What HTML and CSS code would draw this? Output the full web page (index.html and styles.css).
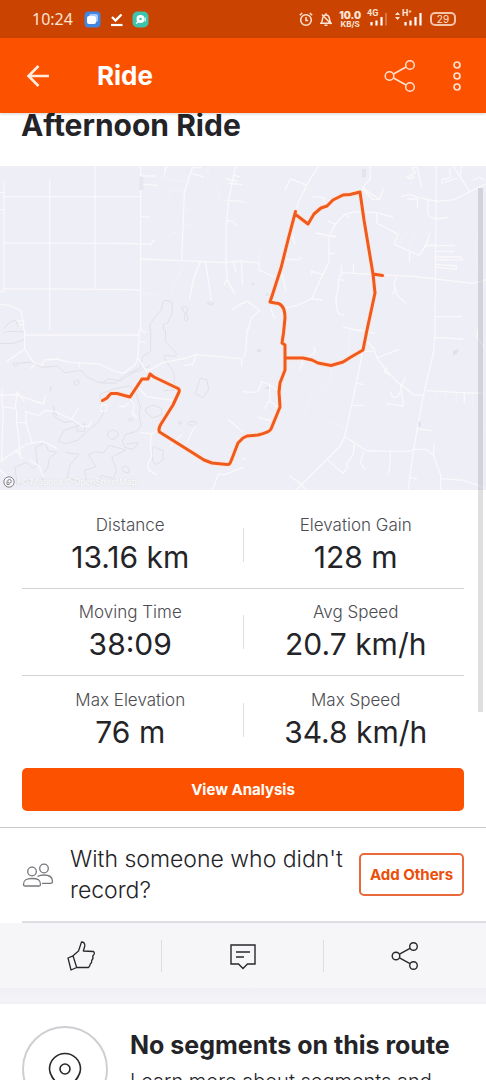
FILE: index.html
```html
<!DOCTYPE html>
<html lang="en">
<head>
<meta charset="utf-8">
<meta name="viewport" content="width=device-width, initial-scale=1">
<title>Ride</title>
<link rel="stylesheet" href="styles.css">
</head>
<body>
<div class="screen">
  <div class="status">
    <span class="clock">10:24</span>
    <span class="notes">
      <svg width="17" height="17" viewBox="0 0 17 17"><rect x=".5" y=".5" width="16" height="16" rx="4" fill="#4486dd"/><rect x="5" y="3" width="9" height="8" rx="2" fill="#a9ccff"/><rect x="3" y="5" width="9" height="8" rx="2" fill="#fff"/></svg>
      <svg width="13" height="15" viewBox="0 0 13 15"><path d="M2 5l3.500 3.500L11.500 2.500" fill="none" stroke="#fff" stroke-width="2.400"/><path d="M1 13h11.500" stroke="#fff" stroke-width="2.200"/></svg>
      <svg width="17" height="17" viewBox="0 0 17 17"><rect x=".5" y=".5" width="16" height="16" rx="5" fill="#3fc3ae"/><circle cx="8.500" cy="8" r="4" fill="#fff"/><circle cx="8.500" cy="8" r="1.300" fill="#3fc3ae"/><path d="M4 12.500l2.500-2" stroke="#fff" stroke-width="1.500"/><path d="M13.200 6.500v4" stroke="#fff"/></svg>
    </span>
    <span class="system">
      <svg width="14" height="15" viewBox="0 0 14 15" fill="none" stroke="#fbe3d6" stroke-width="1.500"><circle cx="7" cy="8" r="5.300"/><path d="M7 5v3.500h2.200M.8 3.200L3.200 1M13.200 3.200L10.800 1"/></svg>
      <svg width="12" height="15" viewBox="0 0 12 15" fill="none" stroke="#fbe3d6" stroke-width="1.500"><path d="M1 11.200c1.300-1.200 1.300-2.200 1.500-4.200C2.800 4.500 4 3 6 3s3.200 1.500 3.500 4c.2 2 .2 3 1.500 4.200zM6 1.300V3M4.500 13.300h3M2 2.500l9 9.500"/></svg>
      <span class="rate"><b>10.0</b><small>KB/S</small></span>
      <span class="signal"><span class="net">4G</span>
        <svg width="19" height="14" viewBox="0 0 19 14"><path d="M3.500 10v3.500M8.500 8.500v5M13.500 5v8.500" stroke="#fff" stroke-width="2.200"/><path d="M18 1v12.500" stroke="#dd8257" stroke-width="1.600"/></svg></span>
      <svg class="updown" width="5" height="8" viewBox="0 0 5 8" fill="#fbe3d6"><path d="M0 3L2.500 0 5 3zM0 5h5L2.500 8z"/></svg>
      <span class="signal"><span class="net">H⁺</span>
        <svg width="19" height="14" viewBox="0 0 19 14"><path d="M2.500 10v3.500M7.500 8.500v5M12.500 5v8.500M17.500 1v12.500" stroke="#fff" stroke-width="2.200"/></svg></span>
      <span class="battery">29</span>
    </span>
  </div>

  <header class="bar">
    <button class="icon" aria-label="Back"><svg width="24" height="24" viewBox="0 0 24 24" fill="none" stroke="#ffeadf" stroke-width="2.600"><path d="M23 12H3M12.500 2L2.500 12l10 10"/></svg></button>
    <h2 class="bar-title">Ride</h2>
    <button class="icon share" aria-label="Share"><svg width="32" height="34" viewBox="0 0 32 34" fill="none" stroke="#ffe0d0" stroke-width="1.500"><circle cx="5.500" cy="17" r="4.300"/><circle cx="26" cy="6" r="4.300"/><circle cx="26" cy="28" r="4.300"/><path d="M9.500 15L22 8M9.500 19L22 26"/></svg></button>
    <button class="icon" aria-label="More options"><svg width="10" height="32" viewBox="0 0 10 32" fill="none" stroke="#ffe0d0" stroke-width="1.700"><circle cx="5" cy="5" r="3"/><circle cx="5" cy="16" r="3"/><circle cx="5" cy="27" r="3"/></svg></button>
  </header>

  <main class="content">
    <h1 class="title">Afternoon Ride</h1>
    <div class="map">
      <svg class="map-art" viewBox="0 166 486 324" fill="none" stroke-linejoin="round" stroke-linecap="round">
        <defs>
          <path id="route" d="M102.500 400.500L107 398 109 395.500 111 393.500 117 393.500 130 397 142 379 148 379 150 374 154 377 177 388Q180 389 179 392L173 405 161 424Q158 429 159.500 432L193 453 204 460 212 463 227 464.500Q230 465 231 461L233 456 238 443 243 438 247 436 258 435Q270 432 271 429L280 407 279 392 280 383 285 370V345L282 343 283.500 333 285 318Q285 303 275 303L270 302 273 293 281 268 288 240 295.500 211.500 295 214 308 224 314 214 321 208 327 206 333 200 343 195 350 194.500 360 192 364 220 373 274 382.500 275.500M373 274L375 293 367 330 363 350 351 357 343 362 331 365.500 318 363 312 360 303 358 286 358"/>
        </defs>
        <rect y="166" width="486" height="324" fill="#eeeef6"/>
        <g transform="translate(0 165) scale(.33333)">
          <path stroke="#faf8fa" stroke-width="4" d="M12 50V380M12 95H422M12 233L422 236M12 371L412 374L422 380M149 45V495M285 5V372M422 5V495M0 82H12M0 134H12M0 380H12M422 33h42M422 57l50 4M422 154l26 3M422 237h33l3-10 6-2M422 282L545 287 675 293 729 287M578 5L553 80 545 287M573 25l38 11M577 8h27M706 5L686 105 679 180 678 293 682 345 703 385M680 42l30 6M700 30l18 5M690 55l36 4M688 106l41 4M683 166l16 4 13 14M600 292L580 345 569 402M617 292l17 113M702 293l5 28M724 290l4 68M729 413l-34 22M682 345l-10 14M497 5l-4 24M495 10l8-3M0 418l28 3 35 16 8 40v18M52 468h15M55 480l14-2"/>
          <path stroke="#f4f2f8" stroke-width="3" d="M490 35l20 10 45 5M505 95l10-25 35 7M625 8v14M635 65l20 10 2 30 25 2M550 127l18 8M550 181h20M505 220l12-18h22M555 293l-42 90M422 380l50 14M575 360l15 12"/>
          <path stroke="#dfdfe4" stroke-width="3" d="M450 495V477L483 435 490 409Q500 402 517 414L516 445 503 474 490 478V495M545 428l12-5 7 8-5 14 6 17-7 7-6-8 4-13zM623 415q8-6 18 0-8 10-18 0M12 490l18-19 17-5 8 17"/>
          <path fill="#e6e6ed" d="M418 35h12v40h-12z"/>
        </g>
        <g transform="translate(243 165) scale(.33333)">
          <path stroke="#faf8fa" stroke-width="4" d="M225 5L190 62 165 115 160 140M126 76l16-35 45 18M211 95l32 3v15M382 5V42L357 70 390 104h18l13-31M358 68l46 32M476 94l27-5 20 8 60 12 50-5 48-24 47-23M495 102h28v26M555 107v40q8 15 28 15l32-5M580 5L576 495M620 10l3 26-14 7-10-3-3 15M640 40l-35 12M632 5l48 75M655 5l-3 25M690 45l20-8 15 9M498 35l18-12-10-15h17l12 55M490 35q10 12 23 0M448 156l-47-13-66-3-30 8-27 28-20 38V292L234 340 206 402M401 144v30l65 34-12 30 75 33 20-30 30-2M550 242h84M582 259h50M581 276h75l3 8-75 1M581 298l60 5-2 10-58-6M309 150l10 10M255 167l24 12M219 204l55 12M260 213h18M260 265h15M205 318l34 11M210 318l-5 10M237 405l-33-3-42 20-38 7M0 290l48 3v22l60 27M118 330l10 45M155 235l-7-28M130 283l36 1 6-5M295 323L390 328 510 334 690 355 729 345M331 300v25M295 303v20l-7 20 16 3M286 344v25l-7 30 2 35 8 14 12 2M461 337l-8 20 8 32 27 25M455 375l-5 12M500 260l-1 28M575 455h80M560 205l-9 30-22 36M0 415l12-7 38 28-25 23-10 36M84 430l5 18 8 12M302 486l50 12"/>
          <path stroke="#f4f2f8" stroke-width="3" d="M50 290V255l9-10M0 112l28 4M515 207l-20 50M490 205l-15 15-4 12M712 185l-15 50 5 60 20 70"/>
          <path fill="#e4e4ec" d="M357 12h12v25h-12zM26 353h8v8h-8zM68 385h8v8h-8z"/>
        </g>
        <g transform="translate(0 330) scale(.33333)">
          <path stroke="#e0e0e5" stroke-width="3" d="M0 41l42-1 32-12M12 8l10-4 52 2M54 100l42-4 30 16 45-4 23 20 50-7 18 20 30 15 20 3 35 0 30-25 43-20 9-35 23-15V0M496 0v35l34 35-5 10-30-5-2 10 17 25 12 20 2 50-32 2M305 160l20-13 38 5 37-25 20-5 30-15M223 155q6-8 14-2 1 14-10 12-8-3-4-10M150 180l2-11 1 12zM41 100q6-5 12 2-2 8-8 7-7-3-4-9M160 228l10 30-10-22 0 22 32 20 30-5 12 15-5 14 25 2v-23l-62 20-17 32 21 8 37-10 40-37 20-15 18-30-10-22 0-35 40-15 48-10 20 25 13 42-5 10 6 45-16 16-30 8-10 20 8 20 26 5 14-20-36 4M325 305q15-12 30 5-2 18-20 18-18-8-10-23M390 265q8-3 8 5-6 8-12 2zM438 235l22-10 23 10 3 20-28 8-20-15zM458 352q10-7 14 4l18 5-2 30-20 13-10-10-2-25zM586 190l15-45 20 5 5 30-17 22zM567 277q8-7 22 0-3 12-15 10l-9-6zM538 276h5v6h-5zM266 373l20-8 24 4 17-22 20 4 30 10-42 20 15 40-10 25-35-10-14 30-30-10-8-34 33-12zM366 414q10-12 22 2l-2 13-14-3zM50 410l30-13 20 18 12-10-5-53 28-15 10 25 25 5-22 17-5 30-17 20 5 32-43-15-30 12M197 368l40 5-26 30-10 40 32 10M45 410l6 55"/>
          <path stroke="#faf8fa" stroke-width="4" d="M74 0V55L98 95 124 106 133 90 170 87 210 97 300 102 345 125 370 130 405 105 414 82 418 0M74 15H418M422 0l15 8M422 35l14 3M414 85l25 37M440 125l50-28 70-13 27-10 138 12v22M587 78l-8 24-25 4M20 95l54-38M92 115l12-10M237 97v14M0 195l48-1 82 28 7-25M6 180v50l40 5 5-50 20 28M10 230L5 390M0 395L80 342 128 334 170 355M50 240v37l5 35 5 65M78 284V250M53 278h25l18 60M76 245l40 12 18-15 30 2 50 23 35 22 16 0 9-15M216 265l18-28M302 243l18-1v-18h-16zM390 208l13 15-5 30 12 7M358 228l15 2 12-10M402 160l38 40 80 12 10-8M423 308l28 3 7 0 17-13M455 312l-4 35 4 30-12 25 4 20 23 12M510 350l33-35M560 340l25-52M685 270l44 35M729 412l-30 12-25 10-18-3-20 52M90 390l28 20 12 30M48 360l18 25M0 420l45 40"/>
        </g>
        <g transform="translate(243 330) scale(.33333)">
          <path stroke="#faf8fa" stroke-width="4" d="M373 0L360 60 340 160 305 320 290 350 160 480M140 438l35 25 15 17M255 390l45 40 14-18-4-12 20-25 3-30M305 320l68 43 125 1 15-6h35l23 17 22 60v45M362 365l-10 33 14 20M442 366v20l-4 43M595 446l67 5 60 20M577 0L572 65 540 200 512 358 495 480M577 22l82 5M375 38l15 15 15 35 32 42 30 30 32 22 11 12 35 3M402 84l65-26M430 115l-7 10 14 8M488 142l-12 24M473 166l8 62-48-7M442 187l7 13 12 2 14-20M546 182l97 5 75 3M664 190v27M572 345v30M520 296l46 6M330 226h30M340 160l20 3M370 64h18M498 442l22 5M0 185l25 2 20-2 12-30 25 10 20 15M80 165v48l23 18M76 215l-10 20M45 262l38 10M178 92v12l-10 12M190 82l22-10 5-10-5-10M703 0v25l20 25M350 0l45 10M12 0L9 60 3 80M0 385l5 3"/>
          <path stroke="#f4f2f8" stroke-width="3" d="M268 105l-8 45-60 55-18 42M320 0v60l-28-10M265 276l35 16M580 190v25M608 192v28M640 192v28M690 196v35M560 275l-8 15M720 260l-12 28 20 12"/>
          <path fill="#e0e0e9" d="M630 62l18-4-8 15-10 2zM63 175l15-7v10zM526 275h7v15h-7zM43 58h10v8H43z"/>
        </g>
        <use href="#route" class="route-halo"/>
        <use href="#route" class="route-line"/>
      </svg>
      <div class="credit">
        <svg width="12" height="12" viewBox="0 0 12 12" fill="none" stroke="#858589"><circle cx="6" cy="6" r="5.200" fill="#f6f6fa"/><circle cx="6.500" cy="5.300" r="1.800"/><path d="M4 8.500V5.500M4 8.500h2.500"/></svg>
        <span>© Mapbox © OpenStreetMap</span>
      </div>
    </div>

    <dl class="stats">
      <div class="pair">
        <div class="stat"><dt>Distance</dt><dd>13.16 km</dd></div><i class="rule"></i>
        <div class="stat"><dt>Elevation Gain</dt><dd>128 m</dd></div>
      </div>
      <div class="pair">
        <div class="stat"><dt>Moving Time</dt><dd>38:09</dd></div><i class="rule"></i>
        <div class="stat"><dt>Avg Speed</dt><dd>20.7 km/h</dd></div>
      </div>
      <div class="pair">
        <div class="stat"><dt>Max Elevation</dt><dd>76 m</dd></div><i class="rule"></i>
        <div class="stat"><dt>Max Speed</dt><dd>34.8 km/h</dd></div>
      </div>
    </dl>
    <div class="cta"><button class="primary">View Analysis</button></div>

    <section class="others">
      <svg width="32" height="26" viewBox="0 0 32 26" fill="none" stroke="#77777d" stroke-width="1.300"><circle cx="10" cy="9.500" r="4.300"/><circle cx="22" cy="6.500" r="4.300"/><path d="M1.500 22.500C1.500 18 4 16.500 10 16.500s8.500 1.500 8.500 6q0 1.500-1.500 1.500H3q-1.500 0-1.500-1.500zM15.500 14.500c2-1.200 4-1.500 6.500-1.500 6 0 8.500 2 8.500 6.500q0 1.800-1.500 1.800H20"/></svg>
      <p class="others-text">With someone who didn't record?</p>
      <button class="outline">Add Others</button>
    </section>

    <div class="actions">
      <button class="action" aria-label="Give kudos"><svg width="30" height="32" viewBox="0 0 30 32" fill="none" stroke="#28282c" stroke-width="1.300" stroke-linejoin="round"><path d="M2 18l5-2.200 3.700 11.700L5 30zM7 15.800L12.500 11 15.500 2q3.500 0 3.300 4l-1.500 5 10.200.5q2 2-.8 4.500 1 2.500-1 4.500.5 2.300-1.500 3.500 0 2-1.700 3.500H10.700"/></svg></button>
      <button class="action" aria-label="Comment"><svg width="26" height="28" viewBox="0 0 26 28" fill="none" stroke="#28282c" stroke-width="1.400"><path d="M1 3h24v19h-7.500l-4.500 4.500L8.500 22H1zM6 10h14M6 15h8"/></svg></button>
      <button class="action" aria-label="Share activity"><svg width="28" height="30" viewBox="0 0 28 30" fill="none" stroke="#28282c" stroke-width="1.400"><circle cx="5" cy="15" r="3.800"/><circle cx="22.500" cy="5.500" r="3.800"/><circle cx="22.500" cy="24.500" r="3.800"/><path d="M8.500 13.200l10.500-5.800M8.500 16.800l10.500 5.800"/></svg></button>
    </div>

    <section class="segments">
      <div class="pin"><svg width="34" height="44" viewBox="0 0 34 44" fill="none" stroke="#28282c" stroke-width="1.600"><path d="M17 42C13 33 1.500 27 1.500 17a15.500 15.500 0 0 1 31 0C32.500 27 21 33 17 42z"/><circle cx="17" cy="17" r="5"/></svg></div>
      <div class="segments-text">
        <h3>No segments on this route</h3>
        <p>Learn more about segments and</p>
      </div>
    </section>
    <div class="scrollbar"></div>
  </main>
</div>
</body>
</html>
```
FILE: styles.css
```css
* { box-sizing: border-box; }

body, h1, h2, h3, p, dl, dd { margin: 0; }

body {
  font-family: Inter, Roboto, "Liberation Sans", sans-serif;
  color: #242428;
  background: #fff;
}

button {
  font: inherit;
  cursor: pointer;
}

svg {
  display: block;
  flex: none;
}

.screen {
  display: flex;
  flex-direction: column;
  height: 100vh;
  overflow: hidden;
}

/* Status bar */
.status {
  flex: none;
  display: flex;
  align-items: center;
  height: 38px;
  padding: 0 30px 0 32px;
  background: #cb4300;
  color: #fbe3d6;
}

.clock {
  font: 16px/20px "Noto Sans", sans-serif;
}

.notes {
  display: flex;
  align-items: center;
  gap: 9px;
  margin-left: 11px;
}

.system {
  display: flex;
  align-items: center;
  gap: 7px;
  margin-left: auto;
}

.rate {
  display: flex;
  flex-direction: column;
  align-items: center;
  font-size: 10px;
  line-height: 10px;
  font-weight: 700;
}

.rate small {
  font-size: 8px;
  line-height: 8px;
}

.signal {
  position: relative;
  width: 20px;
}

.net {
  position: absolute;
  top: -3px;
  left: -1px;
  font: 700 9px/9px Roboto, sans-serif;
}

.updown {
  margin-right: -4px;
  margin-bottom: 6px;
}

.battery {
  width: 26px;
  height: 14px;
  border: 2px solid #f3c3aa;
  border-radius: 5px;
  font-size: 10px;
  line-height: 10px;
  text-align: center;
}

/* App bar */
.bar {
  flex: none;
  position: relative;
  z-index: 2;
  display: flex;
  align-items: center;
  height: 75px;
  padding: 0 24px 0 26px;
  background: #fc5200;
  box-shadow: 0 1px 3px rgba(0, 0, 0, .18);
}

.icon {
  padding: 0;
  border: 0;
  background: none;
}

.share {
  margin: 0 36px 0 auto;
}

.bar-title {
  margin-left: 47px;
  color: #fff;
  font-size: 26px;
  line-height: 30px;
}

.content {
  position: relative;
  flex: 1;
  min-height: 0;
  overflow: hidden;
}

.title {
  padding: 0 21px;
  height: 53px;
  font-size: 30px;
  line-height: 24px;
}

/* Map */
.map {
  position: relative;
}

.map-art {
  width: 100%;
  height: auto;
}

.route-halo {
  stroke: #fbe5dc;
  stroke-width: 5;
}

.route-line {
  stroke: #f05a1c;
  stroke-width: 3;
}

.credit {
  position: absolute;
  left: 3px;
  bottom: 2px;
  display: flex;
  align-items: center;
  gap: 6px;
  color: #fafafa;
  font: 9px/12px Roboto, sans-serif;
  text-shadow: 0 0 2px #d4d4da;
}

/* Stats */
.stats {
  padding: 12px 22px 0;
}

.pair {
  display: grid;
  grid-template-columns: 1fr 1px 1fr;
  column-gap: 4px;
  align-items: center;
  height: 87px;
  border-bottom: 1px solid #d2d2d6;
}

.pair:last-child {
  border-bottom: 0;
}

.rule {
  height: 34px;
  background: #dedee2;
}

.stat {
  text-align: center;
}

.stat dt {
  color: #4c4c52;
  font-size: 17px;
  line-height: 24px;
  font-weight: 300;
}

.stat dd {
  font-size: 30px;
  line-height: 40px;
  font-weight: 400;
}

.cta {
  padding: 5px 22px 16px;
  border-bottom: 1px solid #cacace;
}

.primary,
.outline {
  height: 43px;
  border: 0;
  border-radius: 5px;
  background: #fc5200;
  color: #fff;
  font-size: 15px;
  font-weight: 700;
}

.primary {
  display: block;
  width: 100%;
}

.outline {
  flex: none;
  width: 105px;
  padding: 0;
  border: 2px solid #e8693a;
  background: #fff;
  color: #ec4e0a;
}

/* Add others */
.others {
  display: flex;
  align-items: center;
  height: 95px;
  padding: 0 22px 2px;
  background: linear-gradient(#dcdce2, #dcdce2) 22px 100% / 100% 2px no-repeat;
}

.others-text {
  flex: 1;
  margin-left: 16px;
  font-size: 23px;
  line-height: 31px;
  font-weight: 300;
}

/* Actions */
.actions {
  display: grid;
  grid-template-columns: repeat(3, 1fr);
  align-items: center;
  height: 81px;
  padding-bottom: 16px;
  background: linear-gradient(#f6f6f9 65px, #efeff5 65px, #f4f4f8 77px, #efeff4);
}

.action {
  display: flex;
  align-items: center;
  justify-content: center;
  height: 32px;
  padding: 0;
  border: 0;
  background: none;
}

.action:not(:last-child) {
  border-right: 1px solid #dedee2;
}

/* Segments */
.segments {
  display: flex;
  gap: 22px;
  padding: 22px;
}

.pin {
  flex: none;
  display: flex;
  justify-content: center;
  width: 86px;
  height: 86px;
  padding-top: 24px;
  border: 2px solid #cfcfd3;
  border-radius: 50%;
}

.segments h3 {
  font-size: 25px;
  line-height: 38px;
  white-space: nowrap;
}

.segments p {
  font-size: 20px;
  line-height: 34px;
  font-weight: 300;
  white-space: nowrap;
}

.scrollbar {
  position: absolute;
  top: 75px;
  right: 3px;
  width: 5px;
  height: 524px;
  background: rgba(120, 120, 125, .24);
}
```
